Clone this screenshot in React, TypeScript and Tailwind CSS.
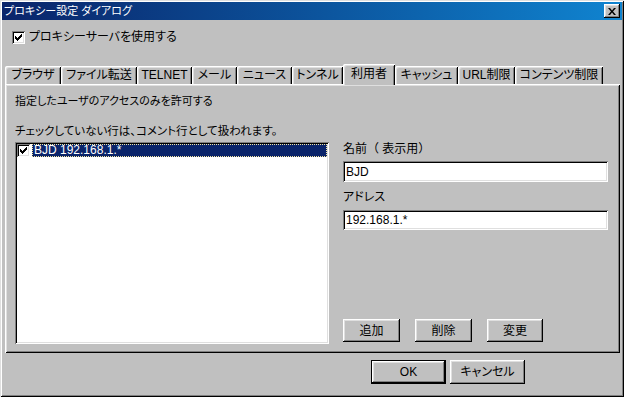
import React from "react";

const raised =
  "shadow-[inset_-1px_-1px_#000,inset_1px_1px_#fff,inset_-2px_-2px_#808080,inset_2px_2px_#dfdfdf]";
const sunken =
  "shadow-[inset_1px_1px_#808080,inset_-1px_-1px_#fff,inset_2px_2px_#000,inset_-2px_-2px_#dfdfdf]";

const CheckBox = () => (
  <div className={`w-[13px] h-[13px] shrink-0 bg-white ${sunken} flex items-center justify-center`}>
    <svg width="13" height="13" viewBox="0 0 13 13" shapeRendering="crispEdges">
      <path d="M9 3h1v3H9v1H8v1H7v1H6v1H5V9H4V8H3V5h1v1h1v1h1V6h1V5h1V4h1z" fill="#000" />
    </svg>
  </div>
);

const Button = ({ label, w, isDefault }: { label: string; w: string; isDefault?: boolean }) => (
  <button
    className={`${w} h-full flex items-center justify-center bg-[#c0c0c0] text-black ${
      isDefault ? "border border-black" : ""
    }`}
  >
    <span className={`w-full h-full flex items-center justify-center ${raised}`}>{label}</span>
  </button>
);

const tabs = [
  { label: "ブラウザ", w: "w-[56px]" },
  { label: "ファイル転送", w: "w-[76px]" },
  { label: "TELNET", w: "w-[55px]" },
  { label: "メール", w: "w-[45px]" },
  { label: "ニュース", w: "w-[55px]" },
  { label: "トンネル", w: "w-[51px]" },
  { label: "利用者", w: "w-[52px]", active: true },
  { label: "キャッシュ", w: "w-[63px]" },
  { label: "URL制限", w: "w-[57px]" },
  { label: "コンテンツ制限", w: "w-[88px]" },
];

export default function App() {
  return (
    <div
      className={`w-[624px] h-[397px] bg-[#c0c0c0] p-[2px] flex flex-col text-[12px] text-black [font-feature-settings:'palt'] shadow-[inset_1px_1px_#dfdfdf,inset_-1px_-1px_#000,inset_2px_2px_#fff,inset_-2px_-2px_#808080]`}
      style={{ fontFamily: "'Liberation Sans', 'Noto Sans CJK JP', sans-serif" }}
    >
      {/* Title bar */}
      <div className="h-[18px] bg-linear-to-r from-[#0a246a] to-[#1084d0] flex items-center pl-[2px] pr-[2px]">
        <span className="text-white text-[11px] leading-[18px]">プロキシー設定 ダイアログ</span>
        <div className={`ml-auto w-[16px] h-[14px] bg-[#c0c0c0] ${raised} flex items-center justify-center`}>
          <svg width="8" height="7" viewBox="0 0 8 7">
            <path d="M0 0h2l2 2.5 2-2.5h2l-3 3.5 3 3.5h-2l-2-2.5-2 2.5h-2l3-3.5z" fill="#000" />
          </svg>
        </div>
      </div>

      {/* Use proxy */}
      <div className="mt-[11px] ml-[10px] h-[13px] flex items-center gap-[4px]">
        <CheckBox />
        <span className="leading-[13px]">プロキシーサーバを使用する</span>
      </div>

      {/* Tabs */}
      <div className="mt-[20px] ml-[3px] h-[20px] flex items-end">
        {tabs.map((t) =>
          t.active ? (
            <div
              key={t.label}
              className={`${t.w} h-[21px] -mb-[1px] relative z-10 bg-[#c0c0c0] flex items-start justify-center pt-[2px] leading-[16px] rounded-tl-[2px] shadow-[inset_1px_1px_#fff,inset_-1px_0_#000,inset_2px_2px_#dfdfdf,inset_-2px_0_#808080]`}
            >
              {t.label}
            </div>
          ) : (
            <div
              key={t.label}
              className={`${t.w} h-[18px] flex items-center justify-center leading-[16px] rounded-tl-[2px] shadow-[inset_1px_1px_#fff,inset_-1px_0_#000,inset_2px_2px_#dfdfdf,inset_-2px_0_#808080]`}
            >
              {t.label}
            </div>
          )
        )}
      </div>

      {/* Tab body */}
      <div className="w-[615px] h-[269px] ml-[3px] pl-[10px] pt-[9px] flex flex-col shadow-[inset_1px_1px_#fff,inset_-1px_-1px_#000,inset_2px_2px_#dfdfdf,inset_-2px_-2px_#808080]">
        <div className="leading-[16px] h-[16px] text-[11px]">指定したユーザのアクセスのみを許可する</div>
        <div className="mt-[14px] leading-[16px] h-[16px] text-[11.5px]">チェックしていない行は、コメント行として扱われます。</div>
        <div className="mt-[3px] flex">
          {/* List */}
          <div className={`w-[314px] h-[202px] bg-white ${sunken} p-[2px]`}>
            <div className="h-[13px] flex items-center">
              <CheckBox />
              <div className="ml-[2px] flex-1 h-[13px] bg-[#0a246a] border border-dotted border-[#f5e6a0] text-white leading-[11px] pl-[1px]">
                BJD 192.168.1.*
              </div>
            </div>
          </div>

          {/* Right column */}
          <div className="ml-[14px] w-[265px] h-[202px] flex flex-col pb-[2px]">
            <div className="leading-[14px] h-[14px] [font-feature-settings:normal]">名前（ 表示用）</div>
            <div className={`mt-[5px] h-[21px] bg-white ${sunken} pl-[3px] flex items-center`}>BJD</div>
            <div className="mt-[8px] leading-[14px] h-[14px]">アドレス</div>
            <div className={`mt-[6px] h-[20px] bg-white ${sunken} pl-[3px] flex items-center`}>192.168.1.*</div>
            <div className="mt-auto h-[23px] flex gap-[15px]">
              <Button label="追加" w="w-[57px]" />
              <Button label="削除" w="w-[57px]" />
              <Button label="変更" w="w-[56px]" />
            </div>
          </div>
        </div>
      </div>

      {/* Dialog buttons */}
      <div className="mt-[7px] ml-[369px] h-[24px] flex gap-[4px]">
        <Button label="OK" w="w-[75px]" isDefault />
        <Button label="キャンセル" w="w-[75px]" />
      </div>
    </div>
  );
}
